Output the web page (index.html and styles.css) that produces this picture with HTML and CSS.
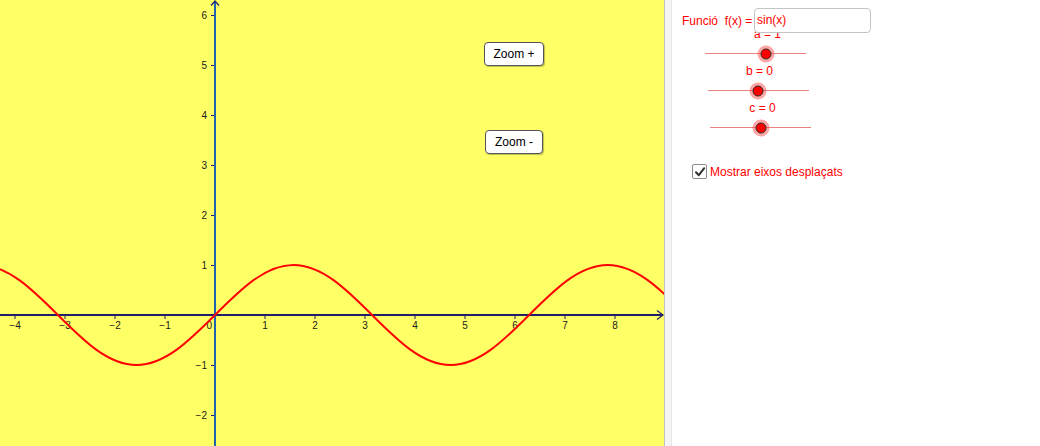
FILE: index.html
```html
<!DOCTYPE html>
<html lang="ca">
<head>
<meta charset="utf-8">
<title>Funció sinus</title>
<link rel="stylesheet" href="styles.css">
</head>
<body>
<div class="app">
  <div class="graphics">
    <svg class="plot" width="664" height="446" viewBox="0 0 664 446" xmlns="http://www.w3.org/2000/svg">
      <rect x="0" y="0" width="664" height="446" fill="#ffff66"/>
      <!-- x ticks -->
      <g stroke="#20206a" stroke-width="1">
        <line x1="15" y1="315" x2="15" y2="319"/>
        <line x1="65" y1="315" x2="65" y2="319"/>
        <line x1="115" y1="315" x2="115" y2="319"/>
        <line x1="165" y1="315" x2="165" y2="319"/>
        <line x1="265" y1="315" x2="265" y2="319"/>
        <line x1="315" y1="315" x2="315" y2="319"/>
        <line x1="365" y1="315" x2="365" y2="319"/>
        <line x1="415" y1="315" x2="415" y2="319"/>
        <line x1="465" y1="315" x2="465" y2="319"/>
        <line x1="515" y1="315" x2="515" y2="319"/>
        <line x1="565" y1="315" x2="565" y2="319"/>
        <line x1="615" y1="315" x2="615" y2="319"/>
      </g>
      <!-- y ticks -->
      <g stroke="#20206a" stroke-width="1">
        <line x1="211" y1="15.5" x2="215" y2="15.5"/>
        <line x1="211" y1="65.5" x2="215" y2="65.5"/>
        <line x1="211" y1="115.5" x2="215" y2="115.5"/>
        <line x1="211" y1="165.5" x2="215" y2="165.5"/>
        <line x1="211" y1="215.5" x2="215" y2="215.5"/>
        <line x1="211" y1="265.5" x2="215" y2="265.5"/>
        <line x1="211" y1="365.5" x2="215" y2="365.5"/>
        <line x1="211" y1="415.5" x2="215" y2="415.5"/>
      </g>
      <!-- axes -->
      <line x1="0" y1="315" x2="663" y2="315" stroke="#20206a" stroke-width="2"/>
      <polyline points="657,310.5 663,315 657,319.5" fill="none" stroke="#20206a" stroke-width="1.2"/>
      <line x1="215" y1="1" x2="215" y2="446" stroke="#1f63b0" stroke-width="2"/>
      <polyline points="211,5.5 215,1 219,5.5" fill="none" stroke="#20206a" stroke-width="1.2"/>
      <!-- labels -->
      <g class="tick-label" text-anchor="middle">
        <text x="15" y="329">−4</text>
        <text x="65" y="329">−3</text>
        <text x="115" y="329">−2</text>
        <text x="165" y="329">−1</text>
        <text x="265" y="329">1</text>
        <text x="315" y="329">2</text>
        <text x="365" y="329">3</text>
        <text x="415" y="329">4</text>
        <text x="465" y="329">5</text>
        <text x="515" y="329">6</text>
        <text x="565" y="329">7</text>
        <text x="615" y="329">8</text>
      </g>
      <g class="tick-label" text-anchor="end">
        <text x="212" y="329">0</text>
        <text x="207" y="19">6</text>
        <text x="207" y="69">5</text>
        <text x="207" y="119">4</text>
        <text x="207" y="169">3</text>
        <text x="207" y="219">2</text>
        <text x="207" y="269">1</text>
        <text x="207" y="369">−1</text>
        <text x="207" y="419">−2</text>
      </g>
      <!-- f(x) = sin(x) -->
      <g transform="translate(215 315) scale(50 -50)">
        <path fill="none" stroke="#ff0000" stroke-width="0.038"
          d="M -4.7124 1
             C -4.1439 1, -3.6539 0.5123, -3.1416 0
             C -2.6293 -0.5123, -2.1393 -1, -1.5708 -1
             C -1.0023 -1, -0.5123 -0.5123, 0 0
             C 0.5123 0.5123, 1.0023 1, 1.5708 1
             C 2.1393 1, 2.6293 0.5123, 3.1416 0
             C 3.6539 -0.5123, 4.1439 -1, 4.7124 -1
             C 5.2809 -1, 5.7709 -0.5123, 6.2832 0
             C 6.7955 0.5123, 7.2855 1, 7.854 1
             C 8.4225 1, 8.9125 0.5123, 9.4248 0"/>
      </g>
    </svg>
    <button class="zbtn zoom-in" type="button">Zoom +</button>
    <button class="zbtn zoom-out" type="button">Zoom -</button>
  </div>
  <div class="divider"></div>
  <div class="side">
    <div class="func-row">
      <span class="func-label">Funció&nbsp; f(x) =</span>
      <div class="func-input">sin(x)</div>
    </div>
    <div class="slider slider-a" style="--p:61px">
      <div class="slider-label">a = 1</div>
      <div class="track"><span class="thumb"></span></div>
    </div>
    <div class="slider slider-b" style="--p:50px">
      <div class="slider-label">b = 0</div>
      <div class="track"><span class="thumb"></span></div>
    </div>
    <div class="slider slider-c" style="--p:51px">
      <div class="slider-label">c = 0</div>
      <div class="track"><span class="thumb"></span></div>
    </div>
    <div class="check-row">
      <span class="check-box">
        <svg width="12" height="12" viewBox="0 0 12 12"><polyline points="2,6.2 4.8,9.2 10.2,2.2" fill="none" stroke="#333" stroke-width="2" stroke-linecap="round" stroke-linejoin="round"/></svg>
      </span>
      <span class="check-text">Mostrar eixos desplaçats</span>
    </div>
  </div>
</div>
</body>
</html>
```
FILE: styles.css
```css
html, body {
  margin: 0;
  padding: 0;
  background: #ffffff;
}
body {
  width: 1040px;
  height: 446px;
  overflow: hidden;
  font-family: "Liberation Sans", Arial, sans-serif;
}
.app {
  display: flex;
  width: 1040px;
  height: 446px;
}
.graphics {
  position: relative;
  width: 664px;
  height: 446px;
  flex: none;
}
.plot {
  display: block;
}
.tick-label {
  font-family: "Liberation Sans", Arial, sans-serif;
  font-size: 10px;
  fill: #1a1a1a;
}
.zbtn {
  position: absolute;
  box-sizing: border-box;
  height: 24px;
  padding: 0;
  background: #ffffff;
  border: 1px solid #555555;
  border-radius: 4px;
  box-shadow: 1px 1px 1px rgba(0, 0, 0, 0.25);
  font-family: "Liberation Sans", Arial, sans-serif;
  font-size: 12px;
  color: #000000;
}
.zoom-in {
  left: 484px;
  top: 42px;
  width: 60px;
}
.zoom-out {
  left: 485px;
  top: 130px;
  width: 58px;
}
.divider {
  flex: none;
  box-sizing: border-box;
  width: 8px;
  height: 446px;
  background: #f4f4f4;
  border-left: 1px solid #c4c4c4;
  border-right: 1px solid #e6e6e6;
}
.side {
  flex: 1;
  display: flex;
  flex-direction: column;
  align-items: flex-start;
  padding-top: 8px;
  color: #ff0000;
  font-size: 12px;
}
.func-row {
  display: flex;
  align-items: center;
  height: 25px;
  margin-left: 10px;
}
.func-label {
  width: 72px;
  white-space: nowrap;
}
.func-input {
  position: relative;
  z-index: 2;
  box-sizing: border-box;
  width: 117px;
  height: 25px;
  line-height: 23px;
  padding-left: 2px;
  background: #ffffff;
  border: 1px solid #c4c4c4;
  border-radius: 4px;
}
.slider {
  height: 38px;
  margin-bottom: -1px;
}
.slider-a {
  margin-top: -6px;
  margin-left: 33px;
}
.slider-b {
  margin-left: 36px;
}
.slider-c {
  margin-left: 38px;
}
.slider-label {
  width: calc(var(--p) * 2 + 3px);
  height: 14px;
  line-height: 14px;
  text-align: center;
  white-space: nowrap;
}
.track {
  position: relative;
  width: 101px;
  height: 24px;
}
.track::before {
  content: "";
  position: absolute;
  left: 0;
  right: 0;
  top: 12px;
  height: 1px;
  background: #ec8282;
}
.thumb {
  position: absolute;
  left: var(--p);
  top: 12.5px;
  box-sizing: border-box;
  width: 11px;
  height: 11px;
  border-radius: 50%;
  background: #ff0000;
  border: 1px solid #2a2a2a;
  box-shadow: 0 0 0 3px rgba(255, 60, 60, 0.45);
  transform: translate(-50%, -50%);
}
.check-row {
  display: flex;
  align-items: center;
  margin-top: 26px;
  margin-left: 20px;
  gap: 3px;
}
.check-box {
  box-sizing: border-box;
  width: 15px;
  height: 15px;
  border: 1.5px solid #8a8a8a;
  border-radius: 2px;
  background: #ffffff;
  display: flex;
  align-items: center;
  justify-content: center;
}
.check-box svg {
  display: block;
}
.check-text {
  white-space: nowrap;
}
```
